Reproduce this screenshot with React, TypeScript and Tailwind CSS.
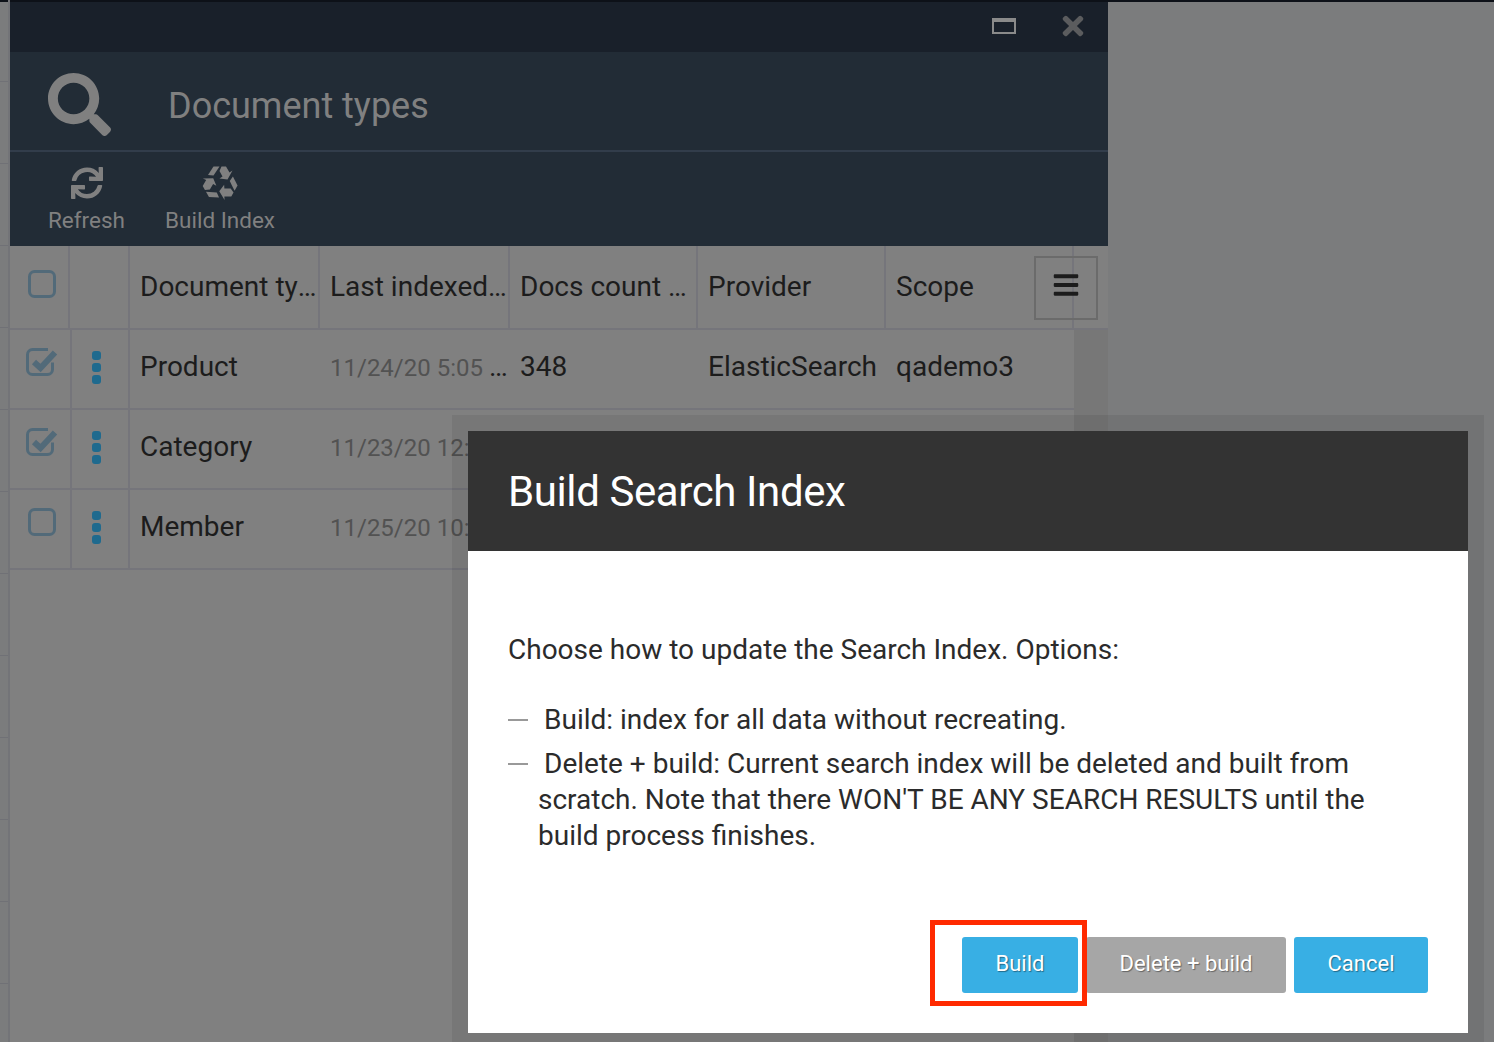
import { FaBars, FaSearch, FaSync, FaTimes } from "react-icons/fa";

const rows = [
    { name: "Product", date: "11/24/20 5:05 PM", count: "348", provider: "ElasticSearch", scope: "qademo3", checked: true },
    { name: "Category", date: "11/23/20 12:30 PM", count: "", provider: "", scope: "", checked: true },
    { name: "Member", date: "11/25/20 10:15 AM", count: "", provider: "", scope: "", checked: false },
];

const headers = [
    { label: "Document type", width: "w-[190px]" },
    { label: "Last indexed date", width: "w-[190px]" },
    { label: "Docs count per index", width: "w-[188px]" },
    { label: "Provider", width: "w-[188px]" },
];

const Dots = () => (
    <div className="flex flex-col gap-[3px] ml-[20px]">
        <div className="w-[9px] h-[9px] rounded-[3px] bg-[#1f6a8e]" />
        <div className="w-[9px] h-[9px] rounded-[3px] bg-[#1f6a8e]" />
        <div className="w-[9px] h-[9px] rounded-[3px] bg-[#1f6a8e]" />
    </div>
);

const Unchecked = () => (
    <svg width="28" height="28" viewBox="0 0 28 28" fill="none" stroke="#526a79" strokeWidth="3">
        <rect x="1.5" y="1.5" width="25" height="25" rx="5" />
    </svg>
);

const Checked = () => (
    <svg width="32" height="28" viewBox="0 0 32 28" fill="none" stroke="#526a79">
        <path strokeWidth="3" d="M22 1.5H6.5a5 5 0 0 0-5 5v15a5 5 0 0 0 5 5h15a5 5 0 0 0 5-5v-7" />
        <path strokeWidth="6" d="M8 14l6.5 6L29 4.5" />
    </svg>
);

const RecycleIcon = () => (
    <svg className="shrink-0" width="36" height="36" viewBox="-18 -18 36 36" fill="#808080">
        {[0, 120, 240].map((deg) => (
            <g key={deg} transform={`rotate(${deg})`}>
                <path d="M-6.5-16.5h6L-6.5-7.5-12-8z" />
                <path d="M1.5-16.5H6l3.5 6 3-2-5 9-8-1 3-2-3-5.5z" />
            </g>
        ))}
    </svg>
);

const App = () => {
    return (
        <div className="relative h-[1042px] overflow-hidden bg-[#7b7c7d] font-['Roboto',sans-serif]">
            <div className="h-[2px] bg-[#0d1118]" />
            <div className="flex h-[1040px]">
                <div className="w-[10px] border-r-2 border-[#737478] -mt-[2px]">
                    {Array.from({ length: 13 }).map((_, i) => (
                        <div key={i} className="h-[82px] border-b border-[#707176]" />
                    ))}
                </div>
                <div className="w-[1098px] flex flex-col bg-[#808080]">
                    <div className="h-[50px] bg-[#19202a] flex items-center justify-end shrink-0">
                        <div className="w-[24px] h-[16px] border-2 border-t-4 border-[#8a8a8a] mr-[42px] -mt-[2px]" />
                        <FaTimes className="text-[30px] text-[#5b5c5e] mr-[20px] -mt-[2px]" />
                    </div>
                    <div className="h-[98px] bg-[#222c36] flex items-center pl-[38px] shrink-0">
                        <FaSearch className="text-[63px] text-[#808080] mt-[6px]" />
                        <div className="ml-[57px] text-[36px] text-[#808080] mt-[10px]">Document types</div>
                    </div>
                    <div className="h-[96px] bg-[#222c36] border-t-2 border-[#323d4b] flex pl-[38px] pt-[13px] shrink-0 text-[22.5px] text-[#808080] whitespace-nowrap">
                        <div className="flex flex-col items-center w-[77px]">
                            <FaSync className="text-[32px] h-[36px] shrink-0" />
                            <div className="mt-[3px]">Refresh</div>
                        </div>
                        <div className="flex flex-col items-center ml-[40px] w-[110px]">
                            <RecycleIcon />
                            <div className="mt-[3px]">Build Index</div>
                        </div>
                    </div>
                    <div className="flex h-[84px] border-b-2 border-[#75757b] text-[28px] text-[#1c1c1c] shrink-0">
                        <div className="w-[60px] border-r-2 border-[#75757b] pl-[18px] pt-[24px]">
                            <Unchecked />
                        </div>
                        <div className="w-[60px] border-r-2 border-[#75757b]" />
                        {headers.map((h) => (
                            <div key={h.label} className={`${h.width} border-r-2 border-[#75757b] pl-[10px] pt-[20px] truncate`}>
                                {h.label}
                            </div>
                        ))}
                        <div className="w-[188px] border-r-2 border-[#75757b] pl-[10px] pt-[20px]">Scope</div>
                        <div className="w-[32px]" />
                    </div>
                    <div className="flex flex-1">
                        <div className="w-[1064px]">
                            {rows.map((r) => (
                                <div key={r.name} className="flex h-[80px] border-b-2 border-[#75757b] text-[28px] text-[#1c1c1c]">
                                    <div className="w-[62px] border-r-2 border-[#75757b] pt-[18px] pl-[16px]">
                                        {r.checked ? (
                                            <Checked />
                                        ) : (
                                            <div className="ml-[2px]">
                                                <Unchecked />
                                            </div>
                                        )}
                                    </div>
                                    <div className="w-[58px] border-r-2 border-[#75757b] pt-[21px]">
                                        <Dots />
                                    </div>
                                    <div className="w-[190px] pl-[10px] pt-[16px]">{r.name}</div>
                                    <div className="w-[190px] pl-[10px] pt-[16px] truncate">
                                        <span className="text-[24px] text-[#525252]">{r.date}</span>
                                    </div>
                                    <div className="w-[188px] pl-[10px] pt-[16px]">{r.count}</div>
                                    <div className="w-[188px] pl-[10px] pt-[16px]">{r.provider}</div>
                                    <div className="w-[178px] pl-[10px] pt-[16px]">{r.scope}</div>
                                </div>
                            ))}
                        </div>
                        <div className="w-[34px] bg-[#777777]" />
                    </div>
                </div>
            </div>

            {/* column menu button sits over the header row */}
            <div className="absolute left-[1034px] top-[256px] w-[64px] h-[64px] border-2 border-[#6b6b6b] flex justify-center pt-[13px]">
                <FaBars className="text-[28px] text-[#1c1c1c]" />
            </div>

            {/* dialog */}
            <div className="absolute left-[452px] top-[415px] w-[1032px] h-[640px] bg-black/[0.07]" />
            <div className="absolute left-[468px] top-[431px] w-[1000px] h-[602px] bg-white flex flex-col">
                <div className="h-[120px] bg-[#333333] flex items-center pl-[40px] text-[42px] tracking-[-0.4px] text-white shrink-0">
                    Build Search Index
                </div>
                <div className="flex-1 pl-[40px] pr-[40px] pt-[81px] text-[28px] leading-[36px] text-[#2b2b2b]">
                    <p>Choose how to update the Search Index. Options:</p>
                    <ul className="mt-[34px] pl-[30px] flex flex-col gap-[8px]">
                        <li>
                            <span className="inline-block align-[8px] w-[20px] h-[2px] bg-[#999999] -ml-[30px] mr-[16px]" />
                            Build: index for all data without recreating.
                        </li>
                        <li>
                            <span className="inline-block align-[8px] w-[20px] h-[2px] bg-[#999999] -ml-[30px] mr-[16px]" />
                            Delete + build: Current search index will be deleted and built from scratch. Note that there WON'T BE ANY SEARCH RESULTS until the build process finishes.
                        </li>
                    </ul>
                </div>
                <div className="flex justify-end gap-[8px] pr-[40px] pb-[40px] text-[22px] text-white [text-shadow:1px_1px_1px_rgba(0,0,0,0.4)]">
                    <div className="w-[116px] h-[56px] pb-[4px] rounded-[3px] bg-[#38afe4] flex items-center justify-center">Build</div>
                    <div className="w-[200px] h-[56px] pb-[4px] rounded-[3px] bg-[#a6a6a6] flex items-center justify-center">Delete + build</div>
                    <div className="w-[134px] h-[56px] pb-[4px] rounded-[3px] bg-[#38afe4] flex items-center justify-center">Cancel</div>
                </div>
            </div>

            {/* red annotation round the Build button */}
            <div className="absolute left-[930px] top-[920px] w-[157px] h-[86px] border-[5px] border-[#ff2a00]" />
        </div>
    );
};

export default App;
